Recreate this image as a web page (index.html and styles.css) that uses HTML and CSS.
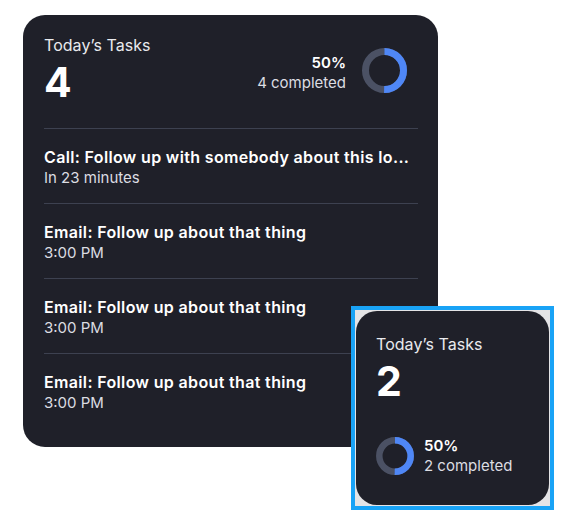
FILE: index.html
```html
<!DOCTYPE html>
<html>
<head>
<meta charset="utf-8">
<link rel="stylesheet" href="styles.css">
</head>
<body>
<div class="canvas">
  <div class="card-large">
    <div class="header">
      <div class="head-left">
        <div class="label">Today’s Tasks</div>
        <div class="count">4</div>
      </div>
      <div class="head-right">
        <div class="stats">
          <div class="pct">50%</div>
          <div class="done">4 completed</div>
        </div>
        <svg class="donut-lg" width="45" height="45" viewBox="0 0 45 45">
          <circle cx="22.5" cy="22.5" r="19" fill="none" stroke="#4b5164" stroke-width="7"/>
          <circle cx="22.5" cy="22.5" r="19" fill="none" stroke="#4f87f6" stroke-width="7" stroke-dasharray="59.69 119.38" transform="rotate(-90 22.5 22.5)"/>
        </svg>
      </div>
    </div>
    <div class="rows">
      <div class="row">
        <div class="row-title">Call: Follow up with somebody about this lo...</div>
        <div class="row-sub">In 23 minutes</div>
      </div>
      <div class="row">
        <div class="row-title">Email: Follow up about that thing</div>
        <div class="row-sub">3:00 PM</div>
      </div>
      <div class="row">
        <div class="row-title">Email: Follow up about that thing</div>
        <div class="row-sub">3:00 PM</div>
      </div>
      <div class="row">
        <div class="row-title">Email: Follow up about that thing</div>
        <div class="row-sub">3:00 PM</div>
      </div>
    </div>
  </div>

  <div class="selection">
    <div class="card-small">
      <div class="small-top">
        <div class="label">Today’s Tasks</div>
        <div class="count">2</div>
      </div>
      <div class="small-bottom">
        <svg class="donut-sm" width="38" height="38" viewBox="0 0 38 38">
          <circle cx="19" cy="19" r="15.7" fill="none" stroke="#4b5164" stroke-width="6.5"/>
          <circle cx="19" cy="19" r="15.7" fill="none" stroke="#4f87f6" stroke-width="6.5" stroke-dasharray="49.32 98.65" transform="rotate(-90 19 19)"/>
        </svg>
        <div class="stats-left">
          <div class="pct">50%</div>
          <div class="done">2 completed</div>
        </div>
      </div>
    </div>
  </div>
</div>
</body>
</html>
```

FILE: styles.css
```css
* { box-sizing: border-box; }

html, body {
  margin: 0;
  padding: 0;
  background: #ffffff;
}

body {
  font-family: Inter, "Noto Sans", "DejaVu Sans", sans-serif;
  color: #ffffff;
}

.canvas {
  position: relative;
  width: 576px;
  height: 531px;
  padding: 15px 0 0 23px;
}

.card-large {
  width: 415px;
  height: 432px;
  background: #1f2029;
  border-radius: 22px;
  padding: 20px 20px 0 21px;
}

.header {
  display: flex;
  justify-content: space-between;
  align-items: flex-start;
  padding-bottom: 23px;
  border-bottom: 1px solid #3d4150;
}

.label {
  font-size: 16px;
  line-height: 20px;
  letter-spacing: 0.05px;
  color: #e9eaee;
}

.count {
  font-size: 41px;
  font-weight: 700;
  line-height: 46px;
  margin-top: 4px;
  color: #ffffff;
}

.head-right {
  display: flex;
  align-items: center;
  gap: 16px;
  margin-top: 13px;
  margin-right: 11px;
}

.stats {
  text-align: right;
  margin-top: 4px;
}

.pct {
  font-size: 15px;
  font-weight: 600;
  line-height: 20px;
  color: #ffffff;
}

.done {
  font-size: 15px;
  line-height: 20px;
  color: #dcdde2;
}

.donut-lg { display: block; }

.row {
  padding: 18px 0 15px 0;
  border-bottom: 1px solid #3d4150;
}

.row:last-child {
  border-bottom: none;
}

.row-title {
  font-size: 16px;
  font-weight: 600;
  line-height: 20px;
  letter-spacing: 0.35px;
  color: #ffffff;
  white-space: nowrap;
  overflow: hidden;
}

.row-sub {
  font-size: 15px;
  line-height: 20px;
  margin-top: 1px;
  color: #dcdde2;
}

.selection {
  position: absolute;
  left: 351px;
  top: 306px;
  width: 203px;
  height: 204px;
  border: 4px solid #19a3f6;
  background: #e4e4e6;
  padding: 1px;
}

.card-small {
  width: 100%;
  height: 100%;
  background: #1f2029;
  border-radius: 21px;
  padding: 23px 20px 29px 20px;
  display: flex;
  flex-direction: column;
  justify-content: space-between;
}

.small-bottom {
  display: flex;
  align-items: center;
  gap: 10px;
}

.donut-sm { display: block; }
```
